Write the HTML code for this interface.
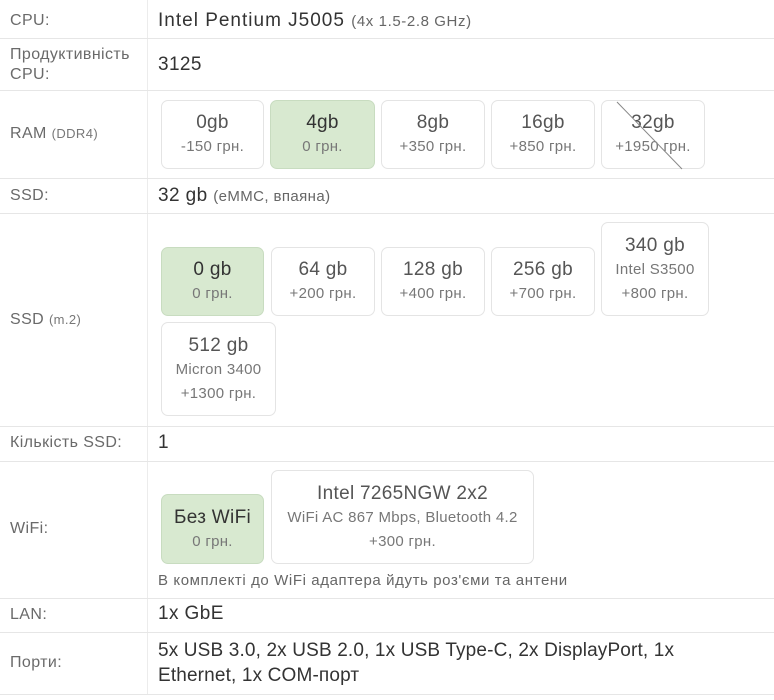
<!DOCTYPE html>
<html><head><meta charset="utf-8"><style>
*{margin:0;padding:0;box-sizing:border-box}
body{width:774px;height:700px;background:#fff;font-family:"Liberation Sans",sans-serif;position:relative;overflow:hidden;color:#333}
.hl{position:absolute;left:0;width:774px;height:1px;background:#e6e6e6}
.vl{position:absolute;left:147px;top:0;width:1px;height:695px;background:#ececec}
.lb{position:absolute;left:10px;font-size:16px;color:#6a6a6a;line-height:20px;letter-spacing:0.4px}
.lb small{font-size:13px;color:#777}
.v{position:absolute;left:158px;font-size:19px;color:#333;line-height:24px;letter-spacing:0.4px}
.v small{font-size:15px;color:#666}
.b{position:absolute;border:1px solid #e4e4e4;border-radius:7px;text-align:center;background:#fff;display:flex;flex-direction:column;justify-content:center;color:#666}
.b.s{background:#d8e9d0;border-color:#c8dcc0;color:#333}
.b .t{font-size:19px;line-height:25px;color:#555;letter-spacing:0.3px}
.b.s .t{color:#333}
.b .p{font-size:15px;line-height:24px;color:#777;letter-spacing:0.3px}
.note{position:absolute;left:158px;top:572px;font-size:15px;color:#666;letter-spacing:0.6px}
</style></head><body>
<div class="vl"></div>
<div class="hl" style="top:38px"></div>
<div class="hl" style="top:90px"></div>
<div class="hl" style="top:178px"></div>
<div class="hl" style="top:213px"></div>
<div class="hl" style="top:426px"></div>
<div class="hl" style="top:461px"></div>
<div class="hl" style="top:598px"></div>
<div class="hl" style="top:632px"></div>
<div class="hl" style="top:694px"></div>

<div class="lb" style="top:11px">CPU:</div>
<div class="v" style="top:9px;letter-spacing:1px">Intel Pentium J5005 <small style="letter-spacing:0.6px">(4x 1.5-2.8 GHz)</small></div>
<div class="lb" style="top:45px">Продуктивність<br>CPU:</div>
<div class="v" style="top:53px">3125</div>

<div class="lb" style="top:124px">RAM <small>(DDR4)</small></div>
<div class="b" style="left:161px;top:100px;width:103px;height:69px"><div class="t">0gb</div><div class="p">-150 грн.</div></div>
<div class="b s" style="left:270px;top:100px;width:105px;height:69px"><div class="t">4gb</div><div class="p">0 грн.</div></div>
<div class="b" style="left:381px;top:100px;width:104px;height:69px"><div class="t">8gb</div><div class="p">+350 грн.</div></div>
<div class="b" style="left:491px;top:100px;width:104px;height:69px"><div class="t">16gb</div><div class="p">+850 грн.</div></div>
<div class="b" style="left:601px;top:100px;width:104px;height:69px"><div class="t">32gb</div><div class="p">+1950 грн.</div>
<svg style="position:absolute;left:0;top:0" width="104" height="69"><line x1="15" y1="1" x2="80" y2="68" stroke="#888" stroke-width="1"/></svg></div>

<div class="lb" style="top:186px">SSD:</div>
<div class="v" style="top:184px">32 gb <small>(eMMC, впаяна)</small></div>

<div class="lb" style="top:310px">SSD <small>(m.2)</small></div>
<div class="b s" style="left:161px;top:247px;width:103px;height:69px"><div class="t">0 gb</div><div class="p">0 грн.</div></div>
<div class="b" style="left:271px;top:247px;width:104px;height:69px"><div class="t">64 gb</div><div class="p">+200 грн.</div></div>
<div class="b" style="left:381px;top:247px;width:104px;height:69px"><div class="t">128 gb</div><div class="p">+400 грн.</div></div>
<div class="b" style="left:491px;top:247px;width:104px;height:69px"><div class="t">256 gb</div><div class="p">+700 грн.</div></div>
<div class="b" style="left:601px;top:222px;width:108px;height:94px"><div class="t">340 gb</div><div class="p">Intel S3500</div><div class="p">+800 грн.</div></div>
<div class="b" style="left:161px;top:322px;width:115px;height:94px"><div class="t">512 gb</div><div class="p">Micron 3400</div><div class="p">+1300 грн.</div></div>

<div class="lb" style="top:433px">Кількість SSD:</div>
<div class="v" style="top:431px">1</div>

<div class="lb" style="top:519px">WiFi:</div>
<div class="b s" style="left:161px;top:494px;width:103px;height:70px"><div class="t">Без WiFi</div><div class="p">0 грн.</div></div>
<div class="b" style="left:271px;top:470px;width:263px;height:94px"><div class="t">Intel 7265NGW 2x2</div><div class="p">WiFi AC 867 Mbps, Bluetooth 4.2</div><div class="p">+300 грн.</div></div>
<div class="note">В комплекті до WiFi адаптера йдуть роз'єми та антени</div>

<div class="lb" style="top:605px">LAN:</div>
<div class="v" style="top:602px">1x GbE</div>

<div class="lb" style="top:653px">Порти:</div>
<div class="v" style="top:638px;line-height:25px;letter-spacing:0.15px">5x USB 3.0, 2x USB 2.0, 1x USB Type-C, 2x DisplayPort, 1x<br>Ethernet, 1x COM-порт</div>
</body></html>
